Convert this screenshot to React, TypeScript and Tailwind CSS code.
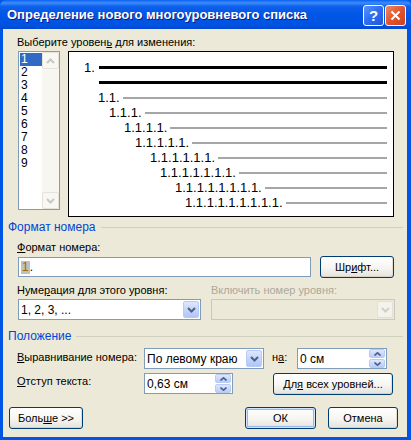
const ui = "font-['Liberation_Sans',Arial,sans-serif] text-[11px] leading-[13px]";

function Chevron({ color = '#4D6185' }: { color?: string }) {
  return (
    <svg width="9" height="6" viewBox="0 0 9 6">
      <path d="M1 1 L4.5 4.5 L8 1" fill="none" stroke={color} strokeWidth="2" />
    </svg>
  );
}

function SmallArrow({ up }: { up?: boolean }) {
  return (
    <svg width="7" height="4" viewBox="0 0 7 4">
      <path d={up ? 'M0.5 3.5 L3.5 0.8 L6.5 3.5' : 'M0.5 0.5 L3.5 3.2 L6.5 0.5'} fill="none" stroke="#4D6185" strokeWidth="1.6" />
    </svg>
  );
}

function XpButton({ children, width, isDefault }: { children: React.ReactNode; width: string; isDefault?: boolean }) {
  return (
    <div
      className={`${width} h-[22px] flex items-center justify-center rounded-[3px] border border-[#003C74] bg-[linear-gradient(180deg,#FFFFFF_0%,#F6F5F1_55%,#E4E2DA_100%)] ${
        isDefault
          ? 'shadow-[inset_0_0_0_1px_#CEE7FF,inset_0_0_0_2px_#98B8EA]'
          : 'shadow-[inset_0_-1px_0_#D8D2C6,inset_-1px_0_0_#E2DED4]'
      }`}
    >
      <span>{children}</span>
    </div>
  );
}

function Combo({ value, width, disabled }: { value?: string; width: string; disabled?: boolean }) {
  return (
    <div
      className={`${width} h-[21px] flex items-center border ${
        disabled ? 'border-[#CAC8BB] bg-[#ECE9D8]' : 'border-[#7F9DB9] bg-white'
      }`}
    >
      <span className="flex-1 pl-[2px] pt-[1px] text-[12px]">{value}</span>
      <div
        className={`w-[16px] h-[17px] mr-[1px] flex items-center justify-center rounded-[2px] border ${
          disabled
            ? 'border-[#E3E1D7] bg-[#F3F2EC]'
            : 'border-[#B9CBF5] bg-[linear-gradient(180deg,#DDE7FE_0%,#C5D6FB_50%,#AFC6F6_100%)]'
        }`}
      >
        <Chevron color={disabled ? '#D0CFC6' : '#4D6185'} />
      </div>
    </div>
  );
}

function Spin({ value, width }: { value: string; width: string }) {
  return (
    <div className={`${width} h-[21px] flex items-center border border-[#7F9DB9] bg-white`}>
      <span className="flex-1 pl-[2px] pt-[1px] text-[12px]">{value}</span>
      <div className="w-[16px] h-[19px] mr-[1px] flex flex-col gap-[1px]">
        <div className="flex-1 flex items-center justify-center rounded-[2px] border border-[#B9CBF5] bg-[linear-gradient(180deg,#DDE7FE_0%,#B8CDF8_100%)]">
          <SmallArrow up />
        </div>
        <div className="flex-1 flex items-center justify-center rounded-[2px] border border-[#B9CBF5] bg-[linear-gradient(180deg,#DDE7FE_0%,#B8CDF8_100%)]">
          <SmallArrow />
        </div>
      </div>
    </div>
  );
}

function SectionHeader({ title }: { title: string }) {
  return (
    <div className="ml-[5px] mr-[4px] flex items-center h-[13px]">
      <span className="text-[#0046D5] text-[12px]">{title}</span>
      <div className="flex-1 ml-[5px] h-px bg-[#D0D0BF]" />
    </div>
  );
}

const levels = [
  { label: '1.1.', pad: 'pl-[29px]' },
  { label: '1.1.1.', pad: 'pl-[40px]' },
  { label: '1.1.1.1.', pad: 'pl-[55px]' },
  { label: '1.1.1.1.1.', pad: 'pl-[66px]' },
  { label: '1.1.1.1.1.1.', pad: 'pl-[81px]' },
  { label: '1.1.1.1.1.1.1.', pad: 'pl-[91px]' },
  { label: '1.1.1.1.1.1.1.1.', pad: 'pl-[106px]' },
  { label: '1.1.1.1.1.1.1.1.1.', pad: 'pl-[116px]' },
];

function Preview() {
  return (
    <div className="ml-[8px] w-[326px] h-[166px] border border-black bg-white pt-[8px] pr-[6px] font-['Liberation_Sans',Arial,sans-serif] text-[13px]">
      <div className="h-[15px] flex items-center pl-[15px]">
        <span>1.</span>
        <div className="flex-1 ml-[4px] h-[3px] bg-black" />
      </div>
      <div className="h-[15px] flex items-center pl-[30px]">
        <div className="flex-1 h-[3px] bg-black" />
      </div>
      {levels.map((l) => (
        <div key={l.label} className={`h-[15px] flex items-center ${l.pad}`}>
          <span>{l.label}</span>
          <div className="flex-1 ml-[3px] h-[2px] bg-[#A6A6A6]" />
        </div>
      ))}
    </div>
  );
}

function LevelList() {
  return (
    <div className="ml-[15px] w-[42px] h-[159px] border border-[#7F9DB9] bg-white flex">
      <div className="flex-1 pt-[1px] pl-[1px] text-[12px]">
        {['1', '2', '3', '4', '5', '6', '7', '8', '9'].map((n, i) => (
          <div key={n} className={`h-[13px] leading-[13px] pl-[1px] ${i === 0 ? 'bg-[#316AC5] text-white' : ''}`}>
            {n}
          </div>
        ))}
      </div>
      <div className="w-[17px] flex flex-col justify-between bg-[#F7F6F1]">
        <div className="h-[17px] flex items-center justify-center rounded-[2px] border border-[#E5E3DA] bg-[#F8F7F3]">
          <svg width="9" height="6" viewBox="0 0 9 6">
            <path d="M1 5 L4.5 1.5 L8 5" fill="none" stroke="#C9C8C0" strokeWidth="2" />
          </svg>
        </div>
        <div className="h-[17px] flex items-center justify-center rounded-[2px] border border-[#E5E3DA] bg-[#F8F7F3]">
          <Chevron color="#C9C8C0" />
        </div>
      </div>
    </div>
  );
}

export default function App() {
  return (
    <div className={`w-[411px] h-[440px] flex flex-col bg-[#0055E5] ${ui}`}>
      {/* title bar */}
      <div className="h-[29px] flex items-center pl-[7px] pr-[5px] rounded-t-[6px] bg-[linear-gradient(180deg,#0A5FF3_0%,#3C8DF8_10%,#0F60EB_22%,#0056E7_50%,#0053E1_85%,#0049D2_100%)]">
        <span className="flex-1 text-white font-bold text-[13px] font-['Liberation_Sans',Arial,sans-serif] [text-shadow:1px_1px_0_#0A1D85]">
          Определение нового многоуровневого списка
        </span>
        <div className="w-[21px] h-[21px] mt-[1px] flex items-center justify-center rounded-[3px] border border-white bg-[linear-gradient(135deg,#5C93F9_0%,#2E6CF1_50%,#1E58DA_100%)] text-white font-bold text-[15px]">
          ?
        </div>
        <div className="w-[21px] h-[21px] mt-[1px] ml-[1px] flex items-center justify-center rounded-[3px] border border-white bg-[linear-gradient(135deg,#EE8A68_0%,#E0552F_50%,#C9421E_100%)]">
          <svg width="11" height="11" viewBox="0 0 11 11">
            <path d="M1.5 1.5 L9.5 9.5 M9.5 1.5 L1.5 9.5" stroke="white" strokeWidth="2" />
          </svg>
        </div>
      </div>

      {/* body */}
      <div className="flex-1 ml-[3px] mr-[4px] mb-[3px] bg-[#ECE9D8] text-black flex flex-col">
        <div className="mt-[7px] ml-[14px]">
          Выберите уровен<span className="underline">ь</span> для изменения:
        </div>
        <div className="mt-[2px] flex items-start">
          <LevelList />
          <Preview />
        </div>

        <div className="mt-[4px]">
          <SectionHeader title="Формат номера" />
        </div>
        <div className="mt-[7px] ml-[14px]">
          <span className="underline">Ф</span>ормат номера:
        </div>
        <div className="mt-[2px] flex items-start">
          <div className="ml-[15px] mt-[1px] w-[293px] h-[20px] border border-[#7F9DB9] bg-white flex items-center pl-[2px] text-[12px]">
            <span className="bg-[#C0C0C0] text-[#A06A00] px-[1px]">1</span>
            <span>.</span>
          </div>
          <div className="ml-[9px]">
            <XpButton width="w-[74px]">
              Шр<span className="underline">и</span>фт...
            </XpButton>
          </div>
        </div>
        <div className="mt-[6px] flex">
          <div className="ml-[14px] w-[194px]">
            Нуме<span className="underline">р</span>ация для этого уровня:
          </div>
          <div className="text-[#ACA899]">Включить номер уровня:</div>
        </div>
        <div className="mt-[2px] flex">
          <div className="ml-[15px]">
            <Combo width="w-[183px]" value="1, 2, 3, ..." />
          </div>
          <div className="ml-[10px]">
            <Combo width="w-[184px]" disabled />
          </div>
        </div>

        <div className="mt-[10px]">
          <SectionHeader title="Положение" />
        </div>
        <div className="mt-[5px] flex items-center">
          <div className="ml-[14px] w-[127px] -mt-[2px]">
            <span className="underline">В</span>ыравнивание номера:
          </div>
          <Combo width="w-[120px]" value="По левому краю" />
          <div className="ml-[8px] w-[25px] -mt-[2px]">
            н<span className="underline">а</span>:
          </div>
          <Spin width="w-[90px]" value="0 см" />
        </div>
        <div className="mt-[4px] flex items-start">
          <div className="ml-[14px] w-[127px] mt-[2px]">
            <span className="underline">О</span>тступ текста:
          </div>
          <Spin width="w-[89px]" value="0,63 см" />
          <div className="ml-[40px]">
            <XpButton width="w-[120px]">
              Дл<span className="underline">я</span> всех уровней...
            </XpButton>
          </div>
        </div>

        <div className="mt-[12px] flex">
          <div className="ml-[6px]">
            <XpButton width="w-[74px]">
              Боль<span className="underline">ш</span>е &gt;&gt;
            </XpButton>
          </div>
          <div className="ml-[162px]">
            <XpButton width="w-[71px]" isDefault>
              ОК
            </XpButton>
          </div>
          <div className="ml-[12px]">
            <XpButton width="w-[70px]">Отмена</XpButton>
          </div>
        </div>
      </div>
    </div>
  );
}
